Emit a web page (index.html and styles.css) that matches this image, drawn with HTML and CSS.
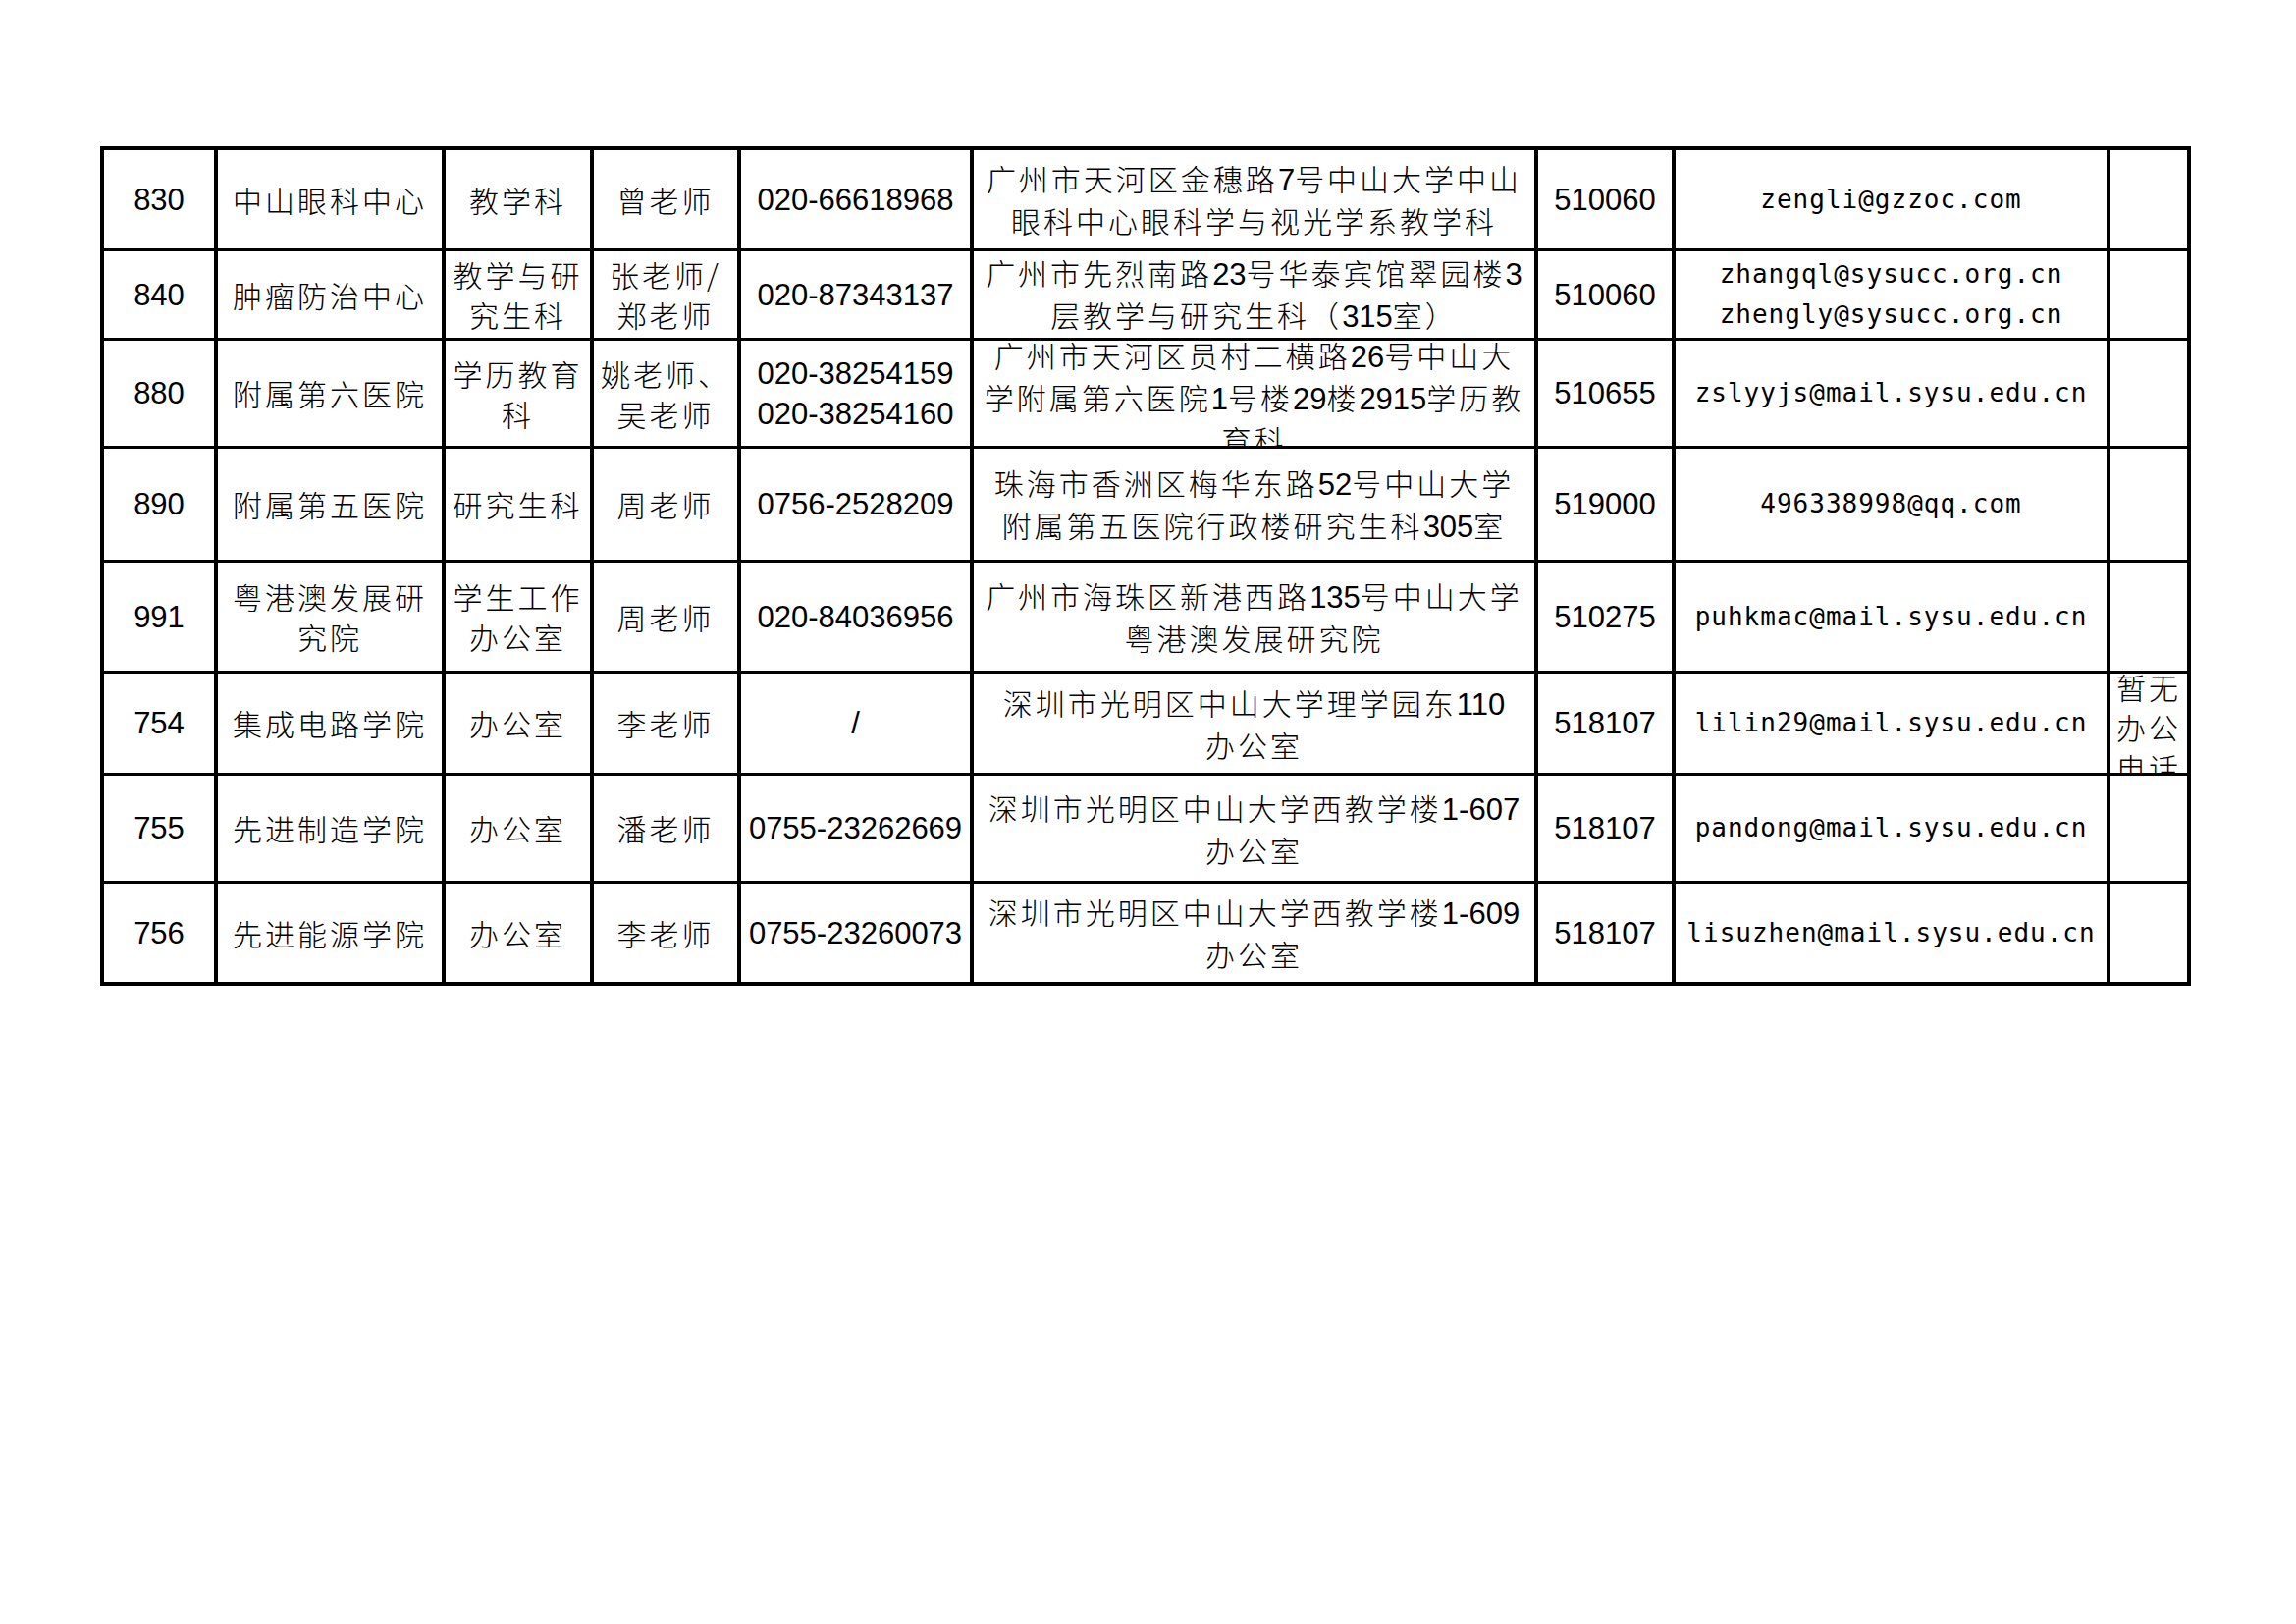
FILE: index.html
```html
<!DOCTYPE html>
<html lang="zh-CN">
<head>
<meta charset="utf-8">
<title>联系方式</title>
<link rel="stylesheet" href="styles.css">
</head>
<body>
<div class="page">
  <div class="grid">
    <div class="c num"><div class="t">830</div></div>
    <div class="c"><div class="t">中山眼科中心</div></div>
    <div class="c"><div class="t">教学科</div></div>
    <div class="c"><div class="t">曾老师</div></div>
    <div class="c num"><div class="t">020-66618968</div></div>
    <div class="c"><div class="t">广州市天河区金穗路<span class="n">7</span>号中山大学中山<br>眼科中心眼科学与视光学系教学科</div></div>
    <div class="c num"><div class="t">510060</div></div>
    <div class="c mail"><div class="t">zengli@gzzoc.com</div></div>
    <div class="c"><div class="t"></div></div>

    <div class="c num"><div class="t">840</div></div>
    <div class="c"><div class="t">肿瘤防治中心</div></div>
    <div class="c"><div class="t">教学与研<br>究生科</div></div>
    <div class="c"><div class="t">张老师/<br>郑老师</div></div>
    <div class="c num"><div class="t">020-87343137</div></div>
    <div class="c"><div class="t">广州市先烈南路<span class="n">23</span>号华泰宾馆翠园楼<span class="n">3</span><br>层教学与研究生科（<span class="n">315</span>室）</div></div>
    <div class="c num"><div class="t">510060</div></div>
    <div class="c mail"><div class="t">zhangql@sysucc.org.cn<br>zhengly@sysucc.org.cn</div></div>
    <div class="c"><div class="t"></div></div>

    <div class="c num"><div class="t">880</div></div>
    <div class="c"><div class="t">附属第六医院</div></div>
    <div class="c"><div class="t">学历教育<br>科</div></div>
    <div class="c"><div class="t">姚老师、<br>吴老师</div></div>
    <div class="c num"><div class="t">020-38254159<br>020-38254160</div></div>
    <div class="c overflow"><div class="t">广州市天河区员村二横路<span class="n">26</span>号中山大<br>学附属第六医院<span class="n">1</span>号楼<span class="n">29</span>楼<span class="n">2915</span>学历教<br>育科</div></div>
    <div class="c num"><div class="t">510655</div></div>
    <div class="c mail"><div class="t">zslyyjs@mail.sysu.edu.cn</div></div>
    <div class="c"><div class="t"></div></div>

    <div class="c num"><div class="t">890</div></div>
    <div class="c"><div class="t">附属第五医院</div></div>
    <div class="c"><div class="t">研究生科</div></div>
    <div class="c"><div class="t">周老师</div></div>
    <div class="c num"><div class="t">0756-2528209</div></div>
    <div class="c"><div class="t">珠海市香洲区梅华东路<span class="n">52</span>号中山大学<br>附属第五医院行政楼研究生科<span class="n">305</span>室</div></div>
    <div class="c num"><div class="t">519000</div></div>
    <div class="c mail"><div class="t">496338998@qq.com</div></div>
    <div class="c"><div class="t"></div></div>

    <div class="c num"><div class="t">991</div></div>
    <div class="c"><div class="t">粤港澳发展研<br>究院</div></div>
    <div class="c"><div class="t">学生工作<br>办公室</div></div>
    <div class="c"><div class="t">周老师</div></div>
    <div class="c num"><div class="t">020-84036956</div></div>
    <div class="c"><div class="t">广州市海珠区新港西路<span class="n">135</span>号中山大学<br>粤港澳发展研究院</div></div>
    <div class="c num"><div class="t">510275</div></div>
    <div class="c mail"><div class="t">puhkmac@mail.sysu.edu.cn</div></div>
    <div class="c"><div class="t"></div></div>

    <div class="c num"><div class="t">754</div></div>
    <div class="c"><div class="t">集成电路学院</div></div>
    <div class="c"><div class="t">办公室</div></div>
    <div class="c"><div class="t">李老师</div></div>
    <div class="c num"><div class="t">/</div></div>
    <div class="c"><div class="t">深圳市光明区中山大学理学园东<span class="n">110</span><br>办公室</div></div>
    <div class="c num"><div class="t">518107</div></div>
    <div class="c mail"><div class="t">lilin29@mail.sysu.edu.cn</div></div>
    <div class="c overflow"><div class="t">暂无<br>办公<br>电话</div></div>

    <div class="c num"><div class="t">755</div></div>
    <div class="c"><div class="t">先进制造学院</div></div>
    <div class="c"><div class="t">办公室</div></div>
    <div class="c"><div class="t">潘老师</div></div>
    <div class="c num"><div class="t">0755-23262669</div></div>
    <div class="c"><div class="t">深圳市光明区中山大学西教学楼<span class="n">1-607</span><br>办公室</div></div>
    <div class="c num"><div class="t">518107</div></div>
    <div class="c mail"><div class="t">pandong@mail.sysu.edu.cn</div></div>
    <div class="c"><div class="t"></div></div>

    <div class="c num"><div class="t">756</div></div>
    <div class="c"><div class="t">先进能源学院</div></div>
    <div class="c"><div class="t">办公室</div></div>
    <div class="c"><div class="t">李老师</div></div>
    <div class="c num"><div class="t">0755-23260073</div></div>
    <div class="c"><div class="t">深圳市光明区中山大学西教学楼<span class="n">1-609</span><br>办公室</div></div>
    <div class="c num"><div class="t">518107</div></div>
    <div class="c mail"><div class="t">lisuzhen@mail.sysu.edu.cn</div></div>
    <div class="c"><div class="t"></div></div>
  </div>
</div>
</body>
</html>
```
FILE: styles.css
```css
html, body {
  margin: 0;
  padding: 0;
  background: #ffffff;
}

.page {
  padding: 149px 0 0 102px;
}

.grid {
  display: grid;
  grid-template-columns: 116px 232px 151px 150px 237px 575px 140px 443px 78px;
  grid-template-rows: 103px 91px 110px 116px 113px 104px 110px 100px;
  width: max-content;
  border: 4px solid #000;
}

.c {
  border-right: 4px solid #000;
  border-bottom: 3px solid #000;
  overflow: hidden;
  display: flex;
  flex-direction: column;
  justify-content: center;
  align-items: center;
  text-align: center;
  white-space: nowrap;
  color: #000;
  font-family: "Noto Sans CJK SC", sans-serif;
  font-weight: 300;
  font-size: 30px;
  letter-spacing: 3px;
  line-height: 41px;
}

.c:nth-child(9n) {
  border-right: 0;
}

.c:nth-last-child(-n+9) {
  border-bottom: 0;
}

/* cells whose text is taller than the row: the block sits a little lower
   so the first line stays whole and the last one is cut by the rule */
.c.overflow {
  padding-top: 8px;
}

.t {
  flex: none;
}

.num,
.n {
  font-family: "Liberation Sans", Arial, sans-serif;
  font-weight: 400;
  font-size: 31px;
  letter-spacing: 0;
}

.mail {
  font-family: "DejaVu Sans Mono", monospace;
  font-weight: 400;
  font-size: 26px;
  letter-spacing: 1px;
}
```
